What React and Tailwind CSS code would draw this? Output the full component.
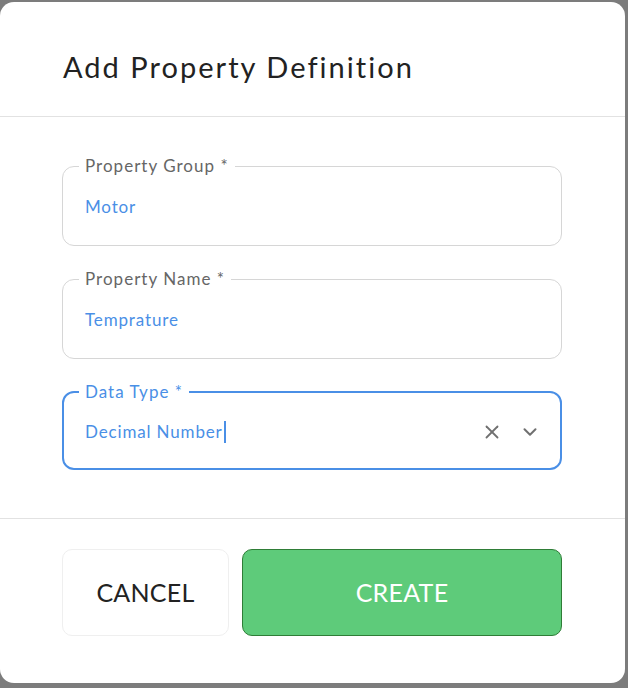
import React from "react";
import { X, ChevronDown } from "lucide-react";

function Field({ label, value, focused, children }) {
  return (
    <fieldset
      className={
        focused
          ? "border-2 border-[#4a8fe6] rounded-[12px] px-[15px] m-0 min-w-0"
          : "border border-[#d6d6d6] rounded-[12px] px-[16px] m-0 min-w-0"
      }
    >
      <legend
        className={
          "px-[6px] text-[17px] leading-[20px] tracking-[0.06em] " +
          (focused ? "text-[#4a8fe6]" : "text-[#666666]")
        }
      >
        {label}
      </legend>
      <div
        className={
          "flex items-center pl-[6px] " +
          (focused ? "pt-[18px] pb-[24px]" : "pt-[19px] pb-[26px]")
        }
      >
        <span className="text-[17px] leading-[24px] tracking-[0.05em] text-[#4a8fe6]">{value}</span>
        {children}
      </div>
    </fieldset>
  );
}

export default function App() {
  return (
    <div
      className="w-[628px] h-[688px] bg-[#7c7c7c] pt-[2px] overflow-hidden"
      style={{ fontFamily: "Lato, 'Noto Sans', sans-serif" }}
    >
      <div className="w-[625px] h-[681px] bg-white rounded-[14px] flex flex-col">
        <div className="px-[63px] pt-[47px] pb-[31px] border-b border-[#e2e2e2]">
          <h2 className="text-[29px] leading-[36px] tracking-[0.07em] text-[#222222]">Add Property Definition</h2>
        </div>

        <div className="px-[62px] pt-[39px] pb-[48px] flex flex-col border-b border-[#e2e2e2] w-[625px]">
          <div className="w-[500px] flex flex-col gap-[23px]">
            <Field label="Property Group *" value="Motor" />
            <Field label="Property Name *" value="Temprature" />
            <Field label="Data Type *" value="Decimal Number" focused>
              <span className="w-[2px] h-[22px] bg-[#4a8fe6] ml-[1px]"></span>
              <div className="ml-auto flex items-center gap-[16px] pr-[4px] text-[#707070]">
                <X size={22} strokeWidth={2} />
                <ChevronDown size={22} strokeWidth={2.2} />
              </div>
            </Field>
          </div>
        </div>

        <div className="px-[62px] pt-[30px] flex gap-[13px]">
          <button className="w-[167px] h-[87px] rounded-[10px] border border-[#efefef] bg-white text-[25px] tracking-[0.01em] text-[#222222]">
            CANCEL
          </button>
          <button className="w-[320px] h-[87px] rounded-[10px] border border-[#2f7d37] bg-[#5ecb7a] text-[25px] tracking-[0.01em] text-white">
            CREATE
          </button>
        </div>
      </div>
    </div>
  );
}
